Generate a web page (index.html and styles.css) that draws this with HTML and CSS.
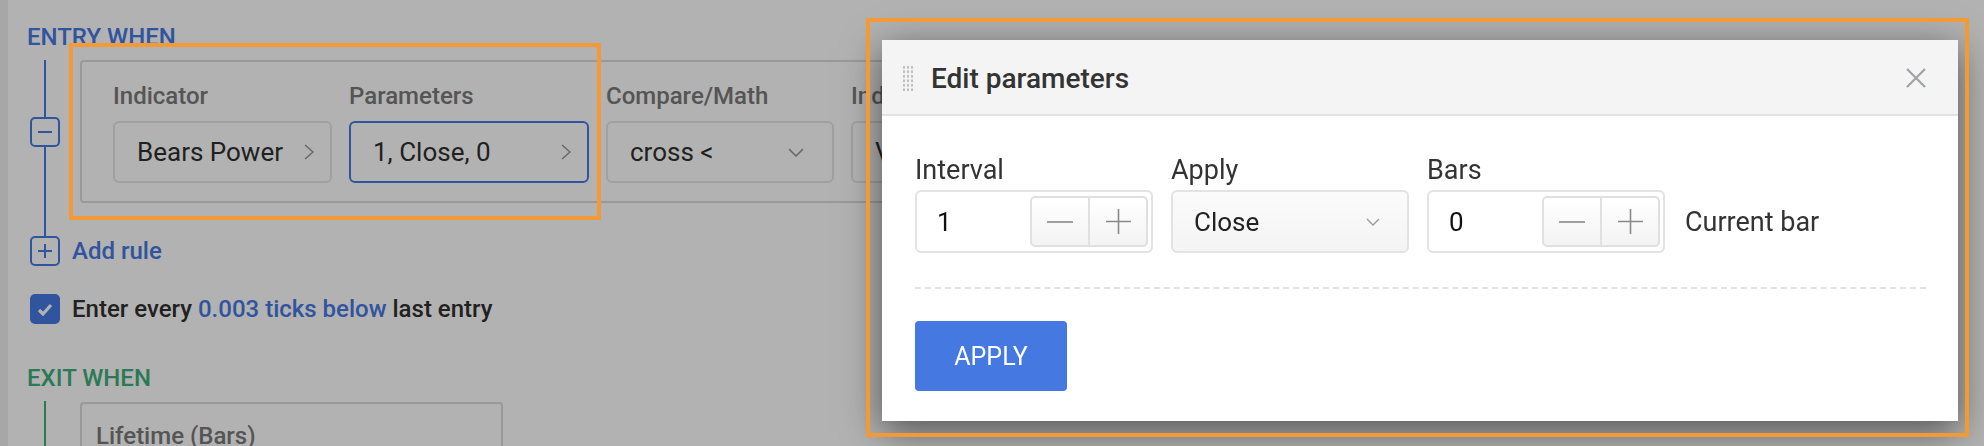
FILE: index.html
```html
<!DOCTYPE html>
<html lang="en">
<head>
    <meta charset="UTF-8">
    <meta name="viewport" content="width=device-width, initial-scale=1.0">
    <title>Strategy builder - Edit parameters</title>
    <link rel="stylesheet" href="styles.css">
</head>
<body>
    <div class="app">
        <div class="rail"></div>
        <main class="builder">
            <h3 class="section-title entry">ENTRY WHEN</h3>
            <div class="rule-row">
                <div class="tree">
                    <span class="tree-btn">
                        <svg width="14" height="2" viewBox="0 0 14 2"><line x1="0" y1="1" x2="14" y2="1" stroke="currentColor" stroke-width="2"/></svg>
                    </span>
                </div>
                <div class="rule-card">
                    <div class="field w-indicator">
                        <div class="field-label">Indicator</div>
                        <div class="picker">Bears Power
                            <svg class="chev-right" width="10" height="16" viewBox="0 0 10 16"><polyline points="1,1 9,8 1,15" fill="none" stroke="currentColor" stroke-width="1.5"/></svg>
                        </div>
                    </div>
                    <div class="field w-params">
                        <div class="field-label">Parameters</div>
                        <div class="picker active">1, Close, 0
                            <svg class="chev-right" width="10" height="16" viewBox="0 0 10 16"><polyline points="1,1 9,8 1,15" fill="none" stroke="currentColor" stroke-width="1.5"/></svg>
                        </div>
                    </div>
                    <div class="field w-compare">
                        <div class="field-label">Compare/Math</div>
                        <div class="picker">cross &lt;
                            <svg class="chev-down" width="16" height="9" viewBox="0 0 16 9"><polyline points="1,1 8,8 15,1" fill="none" stroke="currentColor" stroke-width="1.5"/></svg>
                        </div>
                    </div>
                    <div class="field w-compare">
                        <div class="field-label">Indicator</div>
                        <div class="picker">Value
                            <svg class="chev-right" width="10" height="16" viewBox="0 0 10 16"><polyline points="1,1 9,8 1,15" fill="none" stroke="currentColor" stroke-width="1.5"/></svg>
                        </div>
                    </div>
                </div>
            </div>
            <div class="add-row">
                <span class="tree-btn">
                    <svg width="14" height="14" viewBox="0 0 14 14"><path d="M0 7H14M7 0V14" stroke="currentColor" stroke-width="2"/></svg>
                </span>
                <span class="add-link">Add rule</span>
            </div>
            <div class="check-row">
                <span class="checkbox">
                    <svg width="16" height="13" viewBox="0 0 16 13"><polyline points="2,7 6,11 14,2" fill="none" stroke="#fff" stroke-width="3.2"/></svg>
                </span>
                <span>Enter every <span class="link">0.003 ticks below</span> last entry</span>
            </div>

            <h3 class="section-title exit">EXIT WHEN</h3>
            <div class="exit-row">
                <div class="tree exit-tree"></div>
                <div class="exit-card">
                    <div class="field-label">Lifetime (Bars)</div>
                </div>
            </div>
        </main>
    </div>

    <div class="overlay"></div>

    <div class="modal">
        <div class="modal-head">
            <span class="drag"></span>
            <h2 class="modal-title">Edit parameters</h2>
            <svg class="close" width="20" height="20" viewBox="0 0 20 20"><path d="M1 1L19 19M19 1L1 19" stroke="currentColor" stroke-width="2.2"/></svg>
        </div>
        <div class="modal-body">
            <div class="param-grid">
                <div class="param">
                    <label>Interval</label>
                    <div class="num-input">
                        <span class="val">1</span>
                        <div class="stepper">
                            <span><svg width="26" height="2" viewBox="0 0 26 2"><line x1="0" y1="1" x2="26" y2="1" stroke="currentColor" stroke-width="1.6"/></svg></span>
                            <span><svg width="25" height="25" viewBox="0 0 25 25"><path d="M0 12.5H25M12.5 0V25" stroke="currentColor" stroke-width="1.6"/></svg></span>
                        </div>
                    </div>
                </div>
                <div class="param">
                    <label>Apply</label>
                    <div class="select">
                        <span class="val">Close</span>
                        <svg width="14" height="8" viewBox="0 0 14 8"><polyline points="1,1 7,7 13,1" fill="none" stroke="currentColor" stroke-width="1.3"/></svg>
                    </div>
                </div>
                <div class="param">
                    <label>Bars</label>
                    <div class="num-input">
                        <span class="val">0</span>
                        <div class="stepper">
                            <span><svg width="26" height="2" viewBox="0 0 26 2"><line x1="0" y1="1" x2="26" y2="1" stroke="currentColor" stroke-width="1.6"/></svg></span>
                            <span><svg width="25" height="25" viewBox="0 0 25 25"><path d="M0 12.5H25M12.5 0V25" stroke="currentColor" stroke-width="1.6"/></svg></span>
                        </div>
                    </div>
                </div>
                <div class="current-bar">Current bar</div>
            </div>
            <div class="divider"></div>
            <button class="apply-btn">APPLY</button>
        </div>
    </div>

    <!-- highlight frames -->
    <div class="mark mark-rule"></div>
    <div class="mark mark-modal"></div>
</body>
</html>
```

FILE: styles.css
```css
body {
    margin: 0;
    padding: 0;
    height: 446px;
    overflow: hidden;
    background-color: #fff;
    font-family: Roboto, "Liberation Sans", sans-serif;
    color: #333;
}
.app {
    display: flex;
    height: 446px;
    overflow: hidden;
}
.rail {
    width: 8px;
    background-color: #f0f0f0;
}
.builder {
    flex: 1;
    padding: 23px 0 0 22px;
}
.section-title {
    margin: 0 0 0 -3px;
    font-size: 24px;
    line-height: 28px;
    font-weight: 500;
}
.section-title.entry {
    color: #4579e1;
}
.section-title.exit {
    margin-top: 40px;
    color: #3fae7a;
}
.rule-row {
    display: flex;
    margin-top: 9px;
}
.tree {
    width: 30px;
    padding-bottom: 33px;
    display: flex;
    flex-direction: column;
    justify-content: center;
    background: linear-gradient(#4579e1, #4579e1) center / 2px 100% no-repeat;
}
.tree-btn {
    width: 30px;
    height: 30px;
    box-sizing: border-box;
    border: 2px solid #4579e1;
    border-radius: 5px;
    background-color: #fff;
    color: #4579e1;
    display: flex;
    align-items: center;
    justify-content: center;
}
.rule-card {
    display: flex;
    gap: 17px;
    margin: 0 0 33px 20px;
    padding: 20px 31px 18px 31px;
    border: 2px solid #dcdcdc;
    border-radius: 4px;
}
.field-label {
    font-size: 24px;
    line-height: 28px;
    font-weight: 500;
    color: #7a7a7a;
    margin-bottom: 11px;
}
.w-indicator { width: 219px; }
.w-params { width: 240px; }
.w-compare { width: 228px; }
.picker {
    height: 62px;
    box-sizing: border-box;
    border: 2px solid #e6e6e6;
    border-radius: 6px;
    padding: 0 16px 0 22px;
    display: flex;
    align-items: center;
    justify-content: space-between;
    font-size: 26px;
    color: #303030;
}
.picker.active {
    border-color: #4579e1;
}
.picker svg {
    color: #939393;
}
.chev-down {
    margin-right: 12px;
}
.add-row,
.check-row {
    display: flex;
    align-items: center;
    gap: 12px;
    font-size: 24px;
    font-weight: 500;
}
.add-link,
.link {
    color: #4579e1;
}
.check-row {
    margin-top: 28px;
    color: #303030;
}
.checkbox {
    width: 30px;
    height: 30px;
    border-radius: 5px;
    background-color: #4579e1;
    display: flex;
    align-items: center;
    justify-content: center;
}
.exit-row {
    display: flex;
    margin-top: 9px;
}
.exit-tree {
    padding-bottom: 0;
    background-image: linear-gradient(#3fae7a, #3fae7a);
}
.exit-card {
    width: 423px;
    height: 80px;
    box-sizing: border-box;
    margin-left: 20px;
    margin-top: 1px;
    padding: 18px 14px;
    border: 2px solid #dcdcdc;
    border-radius: 4px;
}
.overlay {
    position: fixed;
    top: 0;
    left: 0;
    width: 100%;
    height: 100%;
    background: rgba(0, 0, 0, 0.3);
}
.modal {
    position: absolute;
    left: 882px;
    top: 40px;
    width: 1076px;
    background: #fff;
    box-shadow: 0 10px 36px rgba(0, 0, 0, 0.55);
}
.modal-head {
    height: 74px;
    display: flex;
    align-items: center;
    padding: 2px 32px 0 20px;
    box-sizing: border-box;
    height: 76px;
    background-color: #f4f4f4;
    border-bottom: 2px solid #e2e2e2;
}
.drag {
    width: 12px;
    height: 27px;
    margin-right: 17px;
    background-image: radial-gradient(circle, #bdbdbd 1px, transparent 1.3px);
    background-size: 4px 4.5px;
}
.modal-title {
    margin: 0;
    font-size: 28px;
    font-weight: 500;
    color: #333;
}
.close {
    margin-left: auto;
    color: #9ea3a8;
}
.modal-body {
    padding: 39px 32px 30px 33px;
}
.param-grid {
    display: flex;
    gap: 18px;
    align-items: flex-end;
}
.param {
    width: 238px;
}
.param label {
    display: block;
    font-size: 27px;
    line-height: 31px;
    margin-bottom: 4px;
    color: #333;
}
.num-input,
.select {
    height: 63px;
    box-sizing: border-box;
    border: 2px solid #e3e3e3;
    border-radius: 6px;
    display: flex;
    align-items: center;
    font-size: 26px;
    color: #111;
}
.num-input {
    padding: 0 3px 0 20px;
}
.select {
    padding: 0 27px 0 21px;
    justify-content: space-between;
    background: linear-gradient(#fbfbfb, #f4f4f4);
    color: #222;
}
.select svg {
    color: #999;
}
.val {
    flex: 1;
}
.stepper {
    width: 118px;
    height: 51px;
    box-sizing: border-box;
    display: flex;
    border: 2px solid #e0e0e0;
    border-radius: 5px;
    background: linear-gradient(#fff, #f3f3f3);
    color: #8a8a8a;
}
.stepper span {
    flex: 1;
    display: flex;
    align-items: center;
    justify-content: center;
}
.stepper span + span {
    border-left: 2px solid #e0e0e0;
}
.current-bar {
    height: 63px;
    display: flex;
    align-items: center;
    margin-left: 2px;
    font-size: 27px;
    color: #333;
}
.divider {
    margin-top: 34px;
    border-top: 2px dashed #dfe3e7;
}
.apply-btn {
    margin-top: 32px;
    width: 152px;
    height: 70px;
    border: none;
    border-radius: 4px;
    background-color: #4579e1;
    color: #fff;
    font-family: Roboto, "Liberation Sans", sans-serif;
    font-size: 25px;
    cursor: pointer;
}
.mark {
    position: absolute;
    box-sizing: border-box;
    border: 4px solid #f39a36;
    pointer-events: none;
}
.mark-rule {
    left: 69px;
    top: 43px;
    width: 532px;
    height: 177px;
}
.mark-modal {
    left: 866px;
    top: 18px;
    width: 1103px;
    height: 419px;
}
```
